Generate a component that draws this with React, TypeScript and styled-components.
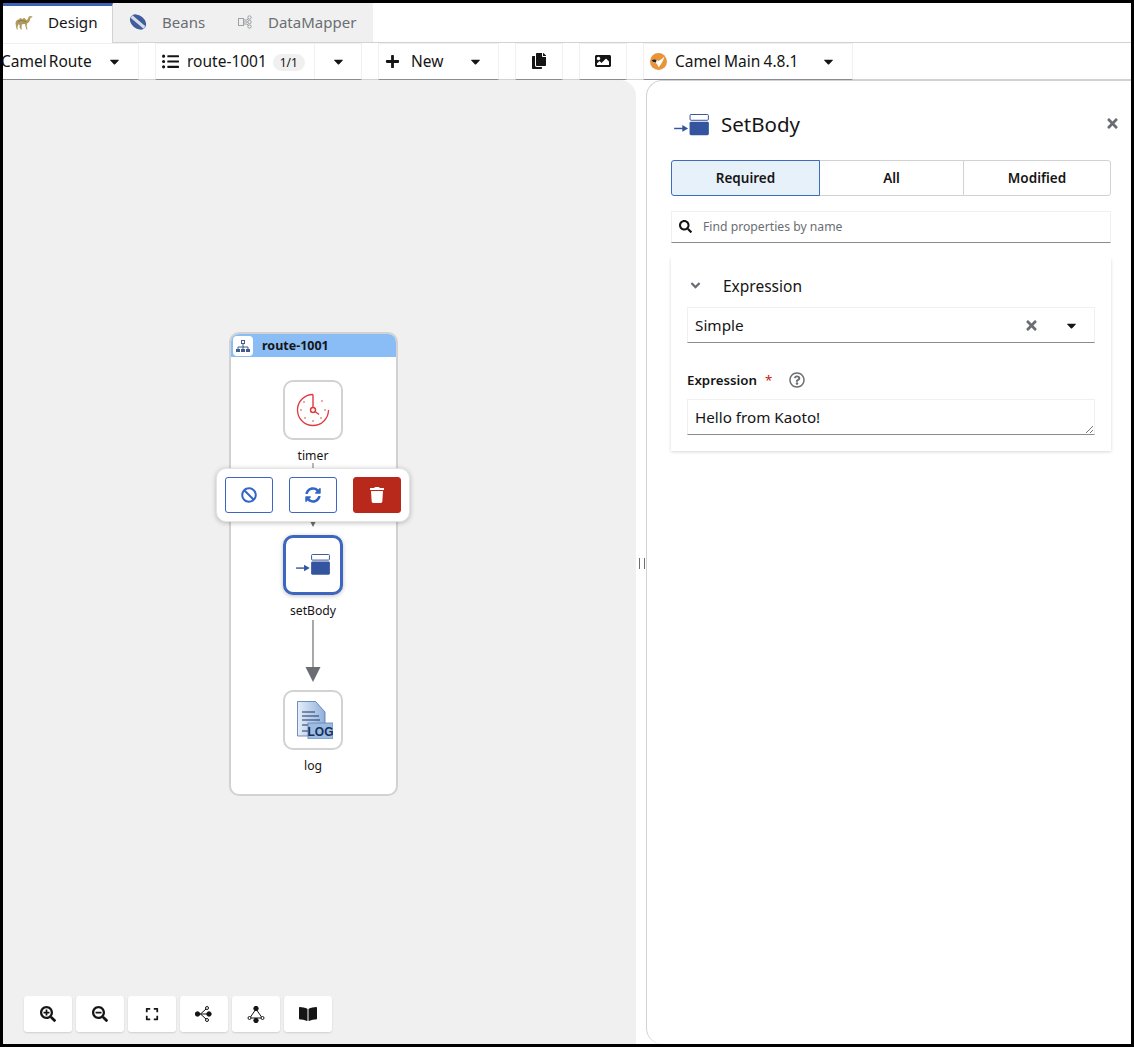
import React from 'react';
import styled, { createGlobalStyle } from 'styled-components';
import { FaSearchPlus, FaSearchMinus, FaExpand, FaBan, FaSyncAlt, FaTrash, FaListUl, FaPlus, FaCopy, FaImage, FaTimes, FaCaretDown, FaAngleDown, FaSearch, FaRegQuestionCircle, FaBookOpen } from 'react-icons/fa';

const Global = createGlobalStyle`
  html, body { margin: 0; padding: 0; background: #fff; }
  body { font-family: "Noto Sans", "Open Sans", sans-serif; color: #151515; }
  * { box-sizing: border-box; }
  svg { flex: none; }
`;

const Frame = styled.div`
  width: 1134px; height: 1047px; border: 3px solid #000; background: #fff;
  display: flex; flex-direction: column; overflow: hidden;
`;
const TabBar = styled.div`
  height: 40px; display: flex; flex: none; border-bottom: 1px solid #d2d2d2;
`;
const Tab = styled.div<{ $active?: boolean; $w: number; $pad: number; $gap: number }>`
  width: ${p => p.$w}px; height: ${p => (p.$active ? 40 : 39)}px; display: flex; align-items: center;
  gap: ${p => p.$gap}px; padding-left: ${p => p.$pad}px; padding-bottom: 5px;
  font-size: ${p => (p.$active ? 15.2 : 15)}px; white-space: nowrap;
  color: ${p => (p.$active ? '#151515' : '#6a6e73')};
  background: ${p => (p.$active ? '#fff' : '#f0f0f0')};
  border-top: 3px solid ${p => (p.$active ? '#3c64b4' : '#f0f0f0')};
  ${p => (p.$active ? 'border-right: 1px solid #d2d2d2;' : '')}
`;
const Toolbar = styled.div`
  height: 37px; flex: none; display: flex; gap: 16px; box-shadow: inset 0 -1px 0 #d2d2d2; overflow: hidden;
`;
const ToolGroup = styled.div<{ $w: number }>`
  width: ${p => p.$w}px; height: 37px; flex: none; display: flex; align-items: center; padding-bottom: 1px; font-size: 15.5px; color: #151515;
  word-spacing: -0.8px; border: 1px solid #f0f0f0; border-bottom: 1px solid #8a8d90;
`;
const EdgeGroup = styled(ToolGroup)`
  border-left: 0;
`;
const Clipped = styled.span`
  margin-left: -2px; width: 106px; white-space: nowrap; word-spacing: -2px;
`;
const ToolLabel = styled.span<{ $gap: number }>`
  display: flex; align-items: center; gap: ${p => p.$gap}px; white-space: nowrap; padding-left: 6px;
`;
const Badge = styled.span`
  display: inline-block; width: 32px; height: 17px; border-radius: 9px; background: #f0f0f0; color: #151515;
  font-size: 12px; line-height: 17px; text-align: center; margin-left: -2px; margin-top: 2px;
`;
const SplitCaret = styled.div<{ $w: number; $divider?: boolean }>`
  margin-left: auto; width: ${p => p.$w}px; height: 35px; display: flex; align-items: center; justify-content: center;
  ${p => (p.$divider ? 'border-left: 1px solid #f0f0f0;' : '')}
`;
const IconOnly = styled.div`
  width: 100%; display: flex; align-items: center; justify-content: center; font-size: 16px;
`;
const Body = styled.div`
  flex: 1; min-height: 0; display: flex;
`;
const Canvas = styled.div`
  position: relative; width: 633px; flex: none; background: #f0f0f0; border-top-right-radius: 16px;
`;
const Splitter = styled.div`
  width: 10px; flex: none; display: flex; align-items: center; justify-content: center; padding: 3px 0 0 1px;
  &::before { content: ""; width: 4px; height: 11px; border-left: 1px solid #6a6e73; border-right: 1px solid #6a6e73; }
`;
const Panel = styled.div`
  flex: 1; min-width: 0; background: #fff; border: 1px solid #d2d2d2; border-right: 0; border-bottom: 0; border-radius: 16px 0 0 16px;
  padding: 0 20px 0 24px; display: flex; flex-direction: column;
`;
const PanelHead = styled.div`
  height: 79px; display: flex; align-items: center; gap: 11px; padding-top: 6px; font-size: 20.5px; position: relative; padding-left: 2px;
  > svg { margin-top: 3px; }
`;
const CloseBtn = styled.span`
  position: absolute; right: -9px; top: 35px; color: #6a6e73; font-size: 15px; line-height: 15px; display: flex;
`;
const Toggle = styled.div`
  display: flex; height: 36px; width: 440px;
`;
const ToggleItem = styled.div<{ $active?: boolean; $w: number }>`
  width: ${p => p.$w}px; display: flex; align-items: center; justify-content: center;
  font-size: 13.5px; font-weight: 600; color: #151515;
  background: ${p => (p.$active ? '#e7f1fa' : '#fff')};
  border: 1px solid ${p => (p.$active ? '#3c6bc0' : '#d2d2d2')};
  margin-left: ${p => (p.$active ? 0 : -1)}px;
  ${p => (p.$active ? 'z-index:1; border-radius: 3px 0 0 3px;' : '')}
  &:last-child { border-radius: 0 3px 3px 0; }
`;
const SearchBox = styled.div`
  margin-top: 15px; width: 440px; height: 32px; display: flex; align-items: center; gap: 11px; padding: 0 0 1px 7px;
  border: 1px solid #f0f0f0; border-bottom: 1px solid #8a8d90; font-size: 12.2px; color: #6a6e73;
`;
const Card = styled.div`
  margin-top: 15px; width: 440px; height: 193px; padding: 0 16px; box-shadow: 0 1px 3px rgba(3,3,3,.16);
  clip-path: inset(0 -6px -6px -6px);
`;
const SectionHead = styled.div`
  height: 49px; display: flex; align-items: center; padding-left: 1px; padding-top: 6px; font-size: 15.5px; color: #151515; gap: 21px;
`;
const Chevron = styled.span`
  display: flex; color: #6a6e73; font-size: 15px; width: 14px; justify-content: center;
`;
const SelectBox = styled.div`
  height: 36px; display: flex; align-items: center; padding-left: 7px; font-size: 15.3px; color: #151515;
  border: 1px solid #f0f0f0; border-bottom: 1px solid #8a8d90;
`;
const SelectIcons = styled.span`
  margin-left: auto; display: flex; align-items: center; gap: 25px; padding-right: 15px;
`;
const ClearIcon = styled.span`
  display: flex; color: #6a6e73; font-size: 15px;
`;
const FieldLabel = styled.div`
  margin-top: 26px; height: 21px; display: flex; align-items: center; font-size: 13.3px; font-weight: 600; color: #151515;
`;
const Star = styled.span`
  color: #c9190b; margin-left: 8px; font-weight: 400;
`;
const Help = styled.span`
  display: flex; margin-left: 17px; font-size: 16px; color: #6a6e73;
`;
const TextArea = styled.div`
  position: relative; margin-top: 9px; height: 36px; display: flex; align-items: center; padding-left: 7px; font-size: 15.2px; color: #151515;
  border: 1px solid #f0f0f0; border-bottom: 1px solid #8a8d90;
`;
const Grip = styled.svg`
  position: absolute; right: 0; bottom: 0;
`;
const Group = styled.div`
  position: absolute; left: 226px; top: 252px; width: 169px; height: 464px; background: #fff; border: 2px solid #d2d2d2; border-radius: 10px; overflow: hidden;
`;
const GroupHead = styled.div`
  height: 23px; background: #8abcf5; display: flex; align-items: center; gap: 9px; padding-left: 2px; font-size: 12.5px; font-weight: 700; color: #151515;
`;
const GroupIcon = styled.span`
  width: 20px; height: 20px; border-radius: 4px; background: #fff; display: flex; align-items: center; justify-content: center;
`;
const Node = styled.div<{ $top: number }>`
  position: absolute; left: 280px; top: ${p => p.$top}px; width: 60px; display: flex; flex-direction: column; align-items: center;
`;
const NodeBox = styled.div<{ $sel?: boolean }>`
  width: 60px; height: 60px; border-radius: 10px; background: #fff; display: flex; align-items: center; justify-content: center;
  border: ${p => (p.$sel ? '3px solid #3c66c0' : '2px solid #d2d2d2')};
  ${p => (p.$sel ? 'box-shadow: 0 1px 4px rgba(0,0,0,.25);' : '')}
`;
const NodeLabel = styled.div`
  margin-top: 7px; font-size: 12.2px; line-height: 18px; color: #151515; white-space: nowrap;
`;
const Edge = styled.svg<{ $top: number }>`
  position: absolute; left: 310px; top: ${p => p.$top}px; overflow: visible;
`;
const ActionBar = styled.div`
  position: absolute; left: 213px; top: 388px; width: 194px; height: 54px; background: #fff; border-radius: 10px; border: 1px solid #e4e4e4;
  box-shadow: 0 1px 5px rgba(0,0,0,.25); display: flex; align-items: center; gap: 16px; padding-left: 8px;
`;
const ActionBtn = styled.div<{ $danger?: boolean }>`
  width: 48px; height: 36px; border-radius: 3px; display: flex; align-items: center; justify-content: center; font-size: 16px;
  background: ${p => (p.$danger ? '#b9291b' : '#fff')};
  color: ${p => (p.$danger ? '#fff' : '#3366c4')};
  border: 1px solid ${p => (p.$danger ? '#b9291b' : '#3c66c0')};
`;
const Controls = styled.div`
  position: absolute; left: 21px; bottom: 12px; display: flex; gap: 4px;
`;
const CtrlBtn = styled.div`
  width: 48px; height: 36px; border-radius: 3px; background: #fff; box-shadow: 0 1px 2px rgba(3,3,3,.14);
  display: flex; align-items: center; justify-content: center; font-size: 16px; color: #151515;
`;
const LogSvg = styled.svg`
  margin-left: 4px;
`;

const Camel = () => (
  <svg width="18" height="15" viewBox="0 0 18 15"><path d="M0.500 8C1 5.500 2.500 4 4 4.500 5 2.500 6.500 2.500 7.500 4.500 8 3 9.500 2.500 10.500 4c.5 1 1.500 1.500 2 .5.5-1.500 1-3 2.500-3.500l2.500.5-.5 1-1.500.2c-.3 2-1 4.500-3.500 5.800l-.3 2.500.8 3.500h-1l-1-3-.5-2.500-3 .3-.5 2.200.3 3h-1L4.500 12l.2-2-1.300-.8L2.500 12l.3 2.500h-1L1 11.500z" fill="#b09a5c" /><path d="M3 7c2-2 5-2 8 0" stroke="#7d6b3a" strokeWidth=".7" fill="none" /></svg>
);
const Bean = () => (
  <svg width="18" height="18" viewBox="0 0 18 18"><ellipse cx="9" cy="9" rx="9" ry="6.500" transform="rotate(40 9 9)" fill="#3f5d9c" /><path d="M2.500 3.500l13 11" stroke="#d5dbe8" strokeWidth="3" /></svg>
);
const Mapper = () => (
  <svg width="14" height="14" viewBox="0 0 14 14" fill="none" stroke="#9aa0a6" strokeWidth="1"><rect x="0.500" y="3.500" width="5" height="7" /><path d="M6 5h3l2-2M6 7h4M6 9h3l2 2" /><circle cx="11.500" cy="2.500" r="1.700" /><circle cx="11.500" cy="7" r="1.700" /><circle cx="11.500" cy="11.500" r="1.700" /></svg>
);
const CamelLogo = () => (
  <svg width="17" height="17" viewBox="0 0 17 17"><circle cx="8.500" cy="8.500" r="8.500" fill="#e8943a" /><path d="M1.500 7.500c3-1 5-.5 7 .5 2-1 4-2.500 6-4.500-1 4-3 7-6 11-.5-2-1-3.500-3-4.500-2 0-3-1-4-2.500z" fill="#fff" /><path d="M1.500 7.500c1.500-1 3.500-1.500 5-.5l-.5 2.500c-2 0-3.500-.5-4.500-2z" fill="#222" /></svg>
);
const SetBodyIcon = ({ w }: { w: number }) => (
  <svg width={w} height={w * 0.6} viewBox="0 0 38 23"><rect x="17.500" y="0.500" width="19" height="6" rx="1" fill="#fff" stroke="#2f4d93" /><rect x="17" y="8" width="20" height="14" rx="1.500" fill="#35549f" /><path d="M1 15h11" stroke="#35549f" strokeWidth="1.500" /><path d="M9.500 11.500l6 3.500-6 3.500z" fill="#35549f" /></svg>
);
const Timer = () => (
  <svg width="34" height="34" viewBox="0 0 34 34" fill="none" stroke="#e0393e"><path d="M17 1.500A15.500 15.500 0 1 0 32.500 17" strokeWidth="1.300" /><path d="M17 1.500V14M19 18.500l4 3" strokeWidth="1.400" /><circle cx="17" cy="17" r="2.500" strokeWidth="1.500" /><g fill="#e0393e" stroke="none"><circle cx="26" cy="8" r=".8" /><circle cx="29" cy="17" r=".8" /><circle cx="5" cy="17" r=".8" /><circle cx="8" cy="9" r=".8" /><circle cx="9" cy="25" r=".8" /><circle cx="17" cy="28" r=".8" /><circle cx="25" cy="25" r=".8" /></g></svg>
);
const LogIcon = () => (
  <LogSvg width="36" height="38" viewBox="0 0 36 38"><defs><linearGradient id="lg" x1="0" x2="1"><stop offset="0" stopColor="#e6eef9" /><stop offset="1" stopColor="#8fb0dc" /></linearGradient></defs><path d="M0.500 0.500h18L28 11v24H0.500z" fill="url(#lg)" stroke="#4f75ad" strokeWidth=".8" /><path d="M5 11h13M5 15h17M5 19h18M5 24h9M5 30h6" stroke="#1c3663" strokeWidth="1.100" /><rect x="11" y="22" width="25" height="16" fill="#9dbce2" stroke="#5f83b8" strokeWidth=".8" /><text x="23.500" y="34.500" textAnchor="middle" fontFamily="Liberation Sans, sans-serif" fontWeight="700" fontSize="12" fill="#16305c">LOG</text></LogSvg>
);
const TopoH = () => (
  <svg width="18" height="16" viewBox="0 0 18 16" fill="none" stroke="#151515" strokeWidth="1"><circle cx="2.500" cy="8" r="2.200" fill="#151515" /><circle cx="14" cy="8" r="2.200" fill="#151515" /><circle cx="12" cy="2" r="1.500" fill="#fff" /><circle cx="12" cy="14" r="1.500" fill="#fff" /><path d="M3 8h10M11 3L5.500 8l5.500 5" /></svg>
);
const TopoV = () => (
  <svg width="18" height="17" viewBox="0 0 18 17" fill="none" stroke="#151515" strokeWidth="1"><circle cx="9" cy="2.500" r="2.200" fill="#151515" /><circle cx="9" cy="14.500" r="2.200" fill="#151515" /><path d="M9 3L3.500 11M9 3l5.500 8M4 12h10M9 12v2" /><circle cx="2.500" cy="12" r="1.500" fill="#fff" /><circle cx="15.500" cy="12" r="1.500" fill="#fff" /></svg>
);
const RouteIcon = () => (
  <svg width="14" height="12" viewBox="0 0 14 12" fill="none" stroke="#3f5d8c" strokeWidth="1"><rect x="5.500" y="0.500" width="3" height="3" /><path d="M7 4v3M2 7h10M2 7v2M7 7v2M12 7v2" /><g fill="#3f5d8c" stroke="none"><rect x="0" y="9" width="4" height="3" /><rect x="5" y="9" width="4" height="3" /><rect x="10" y="9" width="4" height="3" /></g></svg>
);

export default function App() {
  return (
    <>
      <Global />
      <Frame>
        <TabBar>
          <Tab $active $w={110} $pad={12} $gap={15}><Camel />Design</Tab>
          <Tab $w={125} $pad={16} $gap={15}><Bean />Beans</Tab>
          <Tab $w={135} $pad={0} $gap={16}><Mapper />DataMapper</Tab>
        </TabBar>
        <Toolbar>
          <EdgeGroup $w={136}>
            <Clipped>Camel Route</Clipped>
            <FaCaretDown size={15} />
          </EdgeGroup>
          <ToolGroup $w={207}>
            <ToolLabel $gap={8}><FaListUl size={17} />route-1001<Badge>1/1</Badge></ToolLabel>
            <SplitCaret $w={47} $divider><FaCaretDown size={15} /></SplitCaret>
          </ToolGroup>
          <ToolGroup $w={121}>
            <ToolLabel $gap={11}><FaPlus size={15} />New</ToolLabel>
            <SplitCaret $w={46}><FaCaretDown size={15} /></SplitCaret>
          </ToolGroup>
          <ToolGroup $w={48}><IconOnly><FaCopy /></IconOnly></ToolGroup>
          <ToolGroup $w={48}><IconOnly><FaImage /></IconOnly></ToolGroup>
          <ToolGroup $w={210}>
            <ToolLabel $gap={8}><CamelLogo />Camel Main 4.8.1</ToolLabel>
            <SplitCaret $w={47}><FaCaretDown size={15} /></SplitCaret>
          </ToolGroup>
        </Toolbar>
        <Body>
          <Canvas>
            <Group>
              <GroupHead><GroupIcon><RouteIcon /></GroupIcon>route-1001</GroupHead>
            </Group>
            <Node $top={300}><NodeBox><Timer /></NodeBox><NodeLabel>timer</NodeLabel></Node>
            <Edge $top={383} width="1" height="8"><path d="M0 0v6" stroke="#b8b8b8" strokeWidth="2" /></Edge>
            <Edge $top={440} width="1" height="10"><path d="M-2.500 2h5L0 7z" fill="#6a6e73" /></Edge>
            <Node $top={455}><NodeBox $sel><SetBodyIcon w={36} /></NodeBox><NodeLabel>setBody</NodeLabel></Node>
            <Edge $top={540} width="1" height="62"><path d="M0 0v48" stroke="#a8a8a8" strokeWidth="2" /><path d="M-7.500 47h15L0 62z" fill="#6a6e73" /></Edge>
            <Node $top={610}><NodeBox><LogIcon /></NodeBox><NodeLabel>log</NodeLabel></Node>
            <ActionBar>
              <ActionBtn><FaBan /></ActionBtn>
              <ActionBtn><FaSyncAlt /></ActionBtn>
              <ActionBtn $danger><FaTrash /></ActionBtn>
            </ActionBar>
            <Controls>
              <CtrlBtn><FaSearchPlus /></CtrlBtn>
              <CtrlBtn><FaSearchMinus /></CtrlBtn>
              <CtrlBtn><FaExpand size={14} /></CtrlBtn>
              <CtrlBtn><TopoH /></CtrlBtn>
              <CtrlBtn><TopoV /></CtrlBtn>
              <CtrlBtn><FaBookOpen size={18} /></CtrlBtn>
            </Controls>
          </Canvas>
          <Splitter />
          <Panel>
            <PanelHead><SetBodyIcon w={37} />SetBody<CloseBtn><FaTimes /></CloseBtn></PanelHead>
            <Toggle>
              <ToggleItem $active $w={149}>Required</ToggleItem>
              <ToggleItem $w={145}>All</ToggleItem>
              <ToggleItem $w={148}>Modified</ToggleItem>
            </Toggle>
            <SearchBox><FaSearch size={13} color="#151515" />Find properties by name</SearchBox>
            <Card>
              <SectionHead><Chevron><FaAngleDown /></Chevron>Expression</SectionHead>
              <SelectBox>Simple<SelectIcons><ClearIcon><FaTimes /></ClearIcon><FaCaretDown size={15} /></SelectIcons></SelectBox>
              <FieldLabel>Expression<Star>*</Star><Help><FaRegQuestionCircle /></Help></FieldLabel>
              <TextArea>Hello from Kaoto!<Grip width="10" height="10" viewBox="0 0 10 10"><path d="M2 9l7-7M6 9l3-3" stroke="#777" /></Grip></TextArea>
            </Card>
          </Panel>
        </Body>
      </Frame>
    </>
  );
}
